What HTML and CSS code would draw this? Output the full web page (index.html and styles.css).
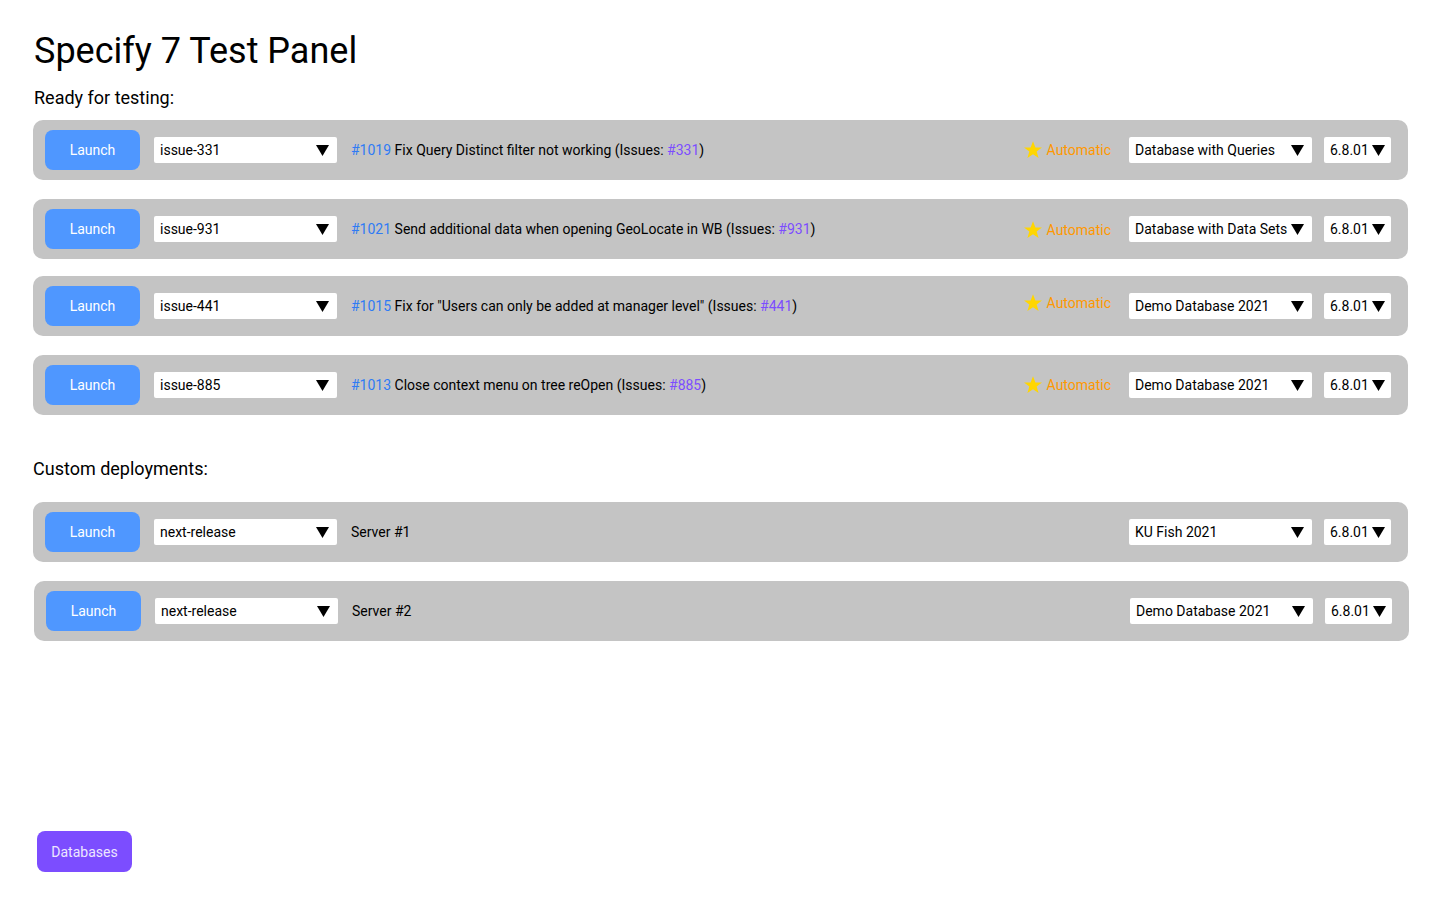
FILE: index.html
```html
<!DOCTYPE html>
<html lang="en">
<head>
<meta charset="utf-8">
<title>Specify 7 Test Panel</title>
<link rel="stylesheet" href="styles.css">
</head>
<body>
<div class="page">
  <h1 class="title">Specify 7 Test Panel</h1>

  <h2 class="section-label">Ready for testing:</h2>
  <div class="rows rows-ready">
    <div class="row">
      <button class="launch">Launch</button>
      <div class="select select-branch"><span>issue-331</span><svg class="caret" viewBox="0 0 13 11"><polygon points="0,0 13,0 6.5,11"/></svg></div>
      <div class="desc"><a class="pr">#1019</a> Fix Query Distinct filter not working (Issues: <a class="issue">#331</a>)</div>
      <div class="auto"><svg class="star" viewBox="0 0 24 24"><polygon points="12,2.5 14.6,9.3 21.8,9.3 16,13.7 18.1,20.8 12,16.6 5.9,20.8 8,13.7 2.2,9.3 9.4,9.3"/></svg><span>Automatic</span></div>
      <div class="select select-db"><span>Database with Queries</span><svg class="caret" viewBox="0 0 13 11"><polygon points="0,0 13,0 6.5,11"/></svg></div>
      <div class="select select-ver"><span>6.8.01</span><svg class="caret" viewBox="0 0 13 11"><polygon points="0,0 13,0 6.5,11"/></svg></div>
    </div>
    <div class="row">
      <button class="launch">Launch</button>
      <div class="select select-branch"><span>issue-931</span><svg class="caret" viewBox="0 0 13 11"><polygon points="0,0 13,0 6.5,11"/></svg></div>
      <div class="desc"><a class="pr">#1021</a> Send additional data when opening GeoLocate in WB (Issues: <a class="issue">#931</a>)</div>
      <div class="auto auto-down"><svg class="star" viewBox="0 0 24 24"><polygon points="12,2.5 14.6,9.3 21.8,9.3 16,13.7 18.1,20.8 12,16.6 5.9,20.8 8,13.7 2.2,9.3 9.4,9.3"/></svg><span>Automatic</span></div>
      <div class="select select-db"><span>Database with Data Sets</span><svg class="caret" viewBox="0 0 13 11"><polygon points="0,0 13,0 6.5,11"/></svg></div>
      <div class="select select-ver"><span>6.8.01</span><svg class="caret" viewBox="0 0 13 11"><polygon points="0,0 13,0 6.5,11"/></svg></div>
    </div>
    <div class="row row-tight">
      <button class="launch">Launch</button>
      <div class="select select-branch"><span>issue-441</span><svg class="caret" viewBox="0 0 13 11"><polygon points="0,0 13,0 6.5,11"/></svg></div>
      <div class="desc"><a class="pr">#1015</a> Fix for "Users can only be added at manager level" (Issues: <a class="issue">#441</a>)</div>
      <div class="auto auto-up"><svg class="star" viewBox="0 0 24 24"><polygon points="12,2.5 14.6,9.3 21.8,9.3 16,13.7 18.1,20.8 12,16.6 5.9,20.8 8,13.7 2.2,9.3 9.4,9.3"/></svg><span>Automatic</span></div>
      <div class="select select-db"><span>Demo Database 2021</span><svg class="caret" viewBox="0 0 13 11"><polygon points="0,0 13,0 6.5,11"/></svg></div>
      <div class="select select-ver"><span>6.8.01</span><svg class="caret" viewBox="0 0 13 11"><polygon points="0,0 13,0 6.5,11"/></svg></div>
    </div>
    <div class="row">
      <button class="launch">Launch</button>
      <div class="select select-branch"><span>issue-885</span><svg class="caret" viewBox="0 0 13 11"><polygon points="0,0 13,0 6.5,11"/></svg></div>
      <div class="desc"><a class="pr">#1013</a> Close context menu on tree reOpen (Issues: <a class="issue">#885</a>)</div>
      <div class="auto"><svg class="star" viewBox="0 0 24 24"><polygon points="12,2.5 14.6,9.3 21.8,9.3 16,13.7 18.1,20.8 12,16.6 5.9,20.8 8,13.7 2.2,9.3 9.4,9.3"/></svg><span>Automatic</span></div>
      <div class="select select-db"><span>Demo Database 2021</span><svg class="caret" viewBox="0 0 13 11"><polygon points="0,0 13,0 6.5,11"/></svg></div>
      <div class="select select-ver"><span>6.8.01</span><svg class="caret" viewBox="0 0 13 11"><polygon points="0,0 13,0 6.5,11"/></svg></div>
    </div>
  </div>

  <h2 class="section-label section-custom">Custom deployments:</h2>
  <div class="rows rows-custom">
    <div class="row">
      <button class="launch">Launch</button>
      <div class="select select-branch"><span>next-release</span><svg class="caret" viewBox="0 0 13 11"><polygon points="0,0 13,0 6.5,11"/></svg></div>
      <div class="desc">Server #1</div>
      <div class="select select-db"><span>KU Fish 2021</span><svg class="caret" viewBox="0 0 13 11"><polygon points="0,0 13,0 6.5,11"/></svg></div>
      <div class="select select-ver"><span>6.8.01</span><svg class="caret" viewBox="0 0 13 11"><polygon points="0,0 13,0 6.5,11"/></svg></div>
    </div>
    <div class="row row-shift">
      <button class="launch">Launch</button>
      <div class="select select-branch"><span>next-release</span><svg class="caret" viewBox="0 0 13 11"><polygon points="0,0 13,0 6.5,11"/></svg></div>
      <div class="desc">Server #2</div>
      <div class="select select-db"><span>Demo Database 2021</span><svg class="caret" viewBox="0 0 13 11"><polygon points="0,0 13,0 6.5,11"/></svg></div>
      <div class="select select-ver"><span>6.8.01</span><svg class="caret" viewBox="0 0 13 11"><polygon points="0,0 13,0 6.5,11"/></svg></div>
    </div>
  </div>

  <button class="databases">Databases</button>
</div>
</body>
</html>
```

FILE: styles.css
```css
* {
  box-sizing: border-box;
}

html, body {
  margin: 0;
  padding: 0;
  background: #ffffff;
}

body {
  font-family: Roboto, "Liberation Sans", Arial, sans-serif;
  color: #000000;
}

.page {
  min-height: 900px;
  display: flex;
  flex-direction: column;
  padding: 30px 32px 28px 33px;
}

.title {
  margin: 0 0 0 1px;
  font-size: 36px;
  line-height: 42px;
  font-weight: 400;
}

.section-label {
  margin: 15px 0 12px 1px;
  font-size: 18px;
  line-height: 21px;
  font-weight: 400;
}

.section-custom {
  margin: 43px 0 23px 0;
}

.rows {
  display: flex;
  flex-direction: column;
  gap: 19px;
}

.row {
  display: flex;
  align-items: center;
  height: 60px;
  padding: 0 17px 0 12px;
  background: #c4c4c4;
  border-radius: 10px;
  font-size: 14px;
  line-height: 16px;
}

.row-tight {
  margin-top: -2px;
}

.row-shift {
  margin-left: 1px;
  margin-right: -1px;
}

.launch {
  flex: none;
  width: 95px;
  height: 40px;
  border: 0;
  border-radius: 8px;
  background: #4f97ff;
  color: #ffffff;
  font-family: inherit;
  font-size: 14px;
  padding: 0;
}

.select {
  flex: none;
  display: flex;
  align-items: center;
  justify-content: space-between;
  height: 26px;
  background: #ffffff;
  border-radius: 2px;
  padding: 0 8px 0 6px;
  white-space: nowrap;
}

.select-branch {
  width: 183px;
  margin-left: 14px;
}

.select-db {
  width: 183px;
  margin-left: 18px;
}

.select-ver {
  width: 67px;
  margin-left: 12px;
  padding-right: 6px;
}

.caret {
  width: 13px;
  height: 11px;
  flex: none;
  fill: #000000;
}

.desc {
  flex: 1;
  margin-left: 14px;
  white-space: nowrap;
}

.pr {
  color: #2f7bf5;
}

.issue {
  color: #7c4dff;
}

.auto {
  flex: none;
  display: flex;
  align-items: center;
  gap: 3px;
  color: #ff9800;
}

.auto-down {
  margin-top: 2px;
}

.auto-up {
  margin-top: -6px;
}

.star {
  width: 22px;
  height: 22px;
  fill: #ffd600;
}

.databases {
  margin-top: auto;
  margin-left: 4px;
  align-self: flex-start;
  width: 95px;
  height: 41px;
  border: 0;
  border-radius: 8px;
  background: #7c4dff;
  color: #ece6ff;
  font-family: inherit;
  font-size: 14px;
  padding: 0;
}
```
